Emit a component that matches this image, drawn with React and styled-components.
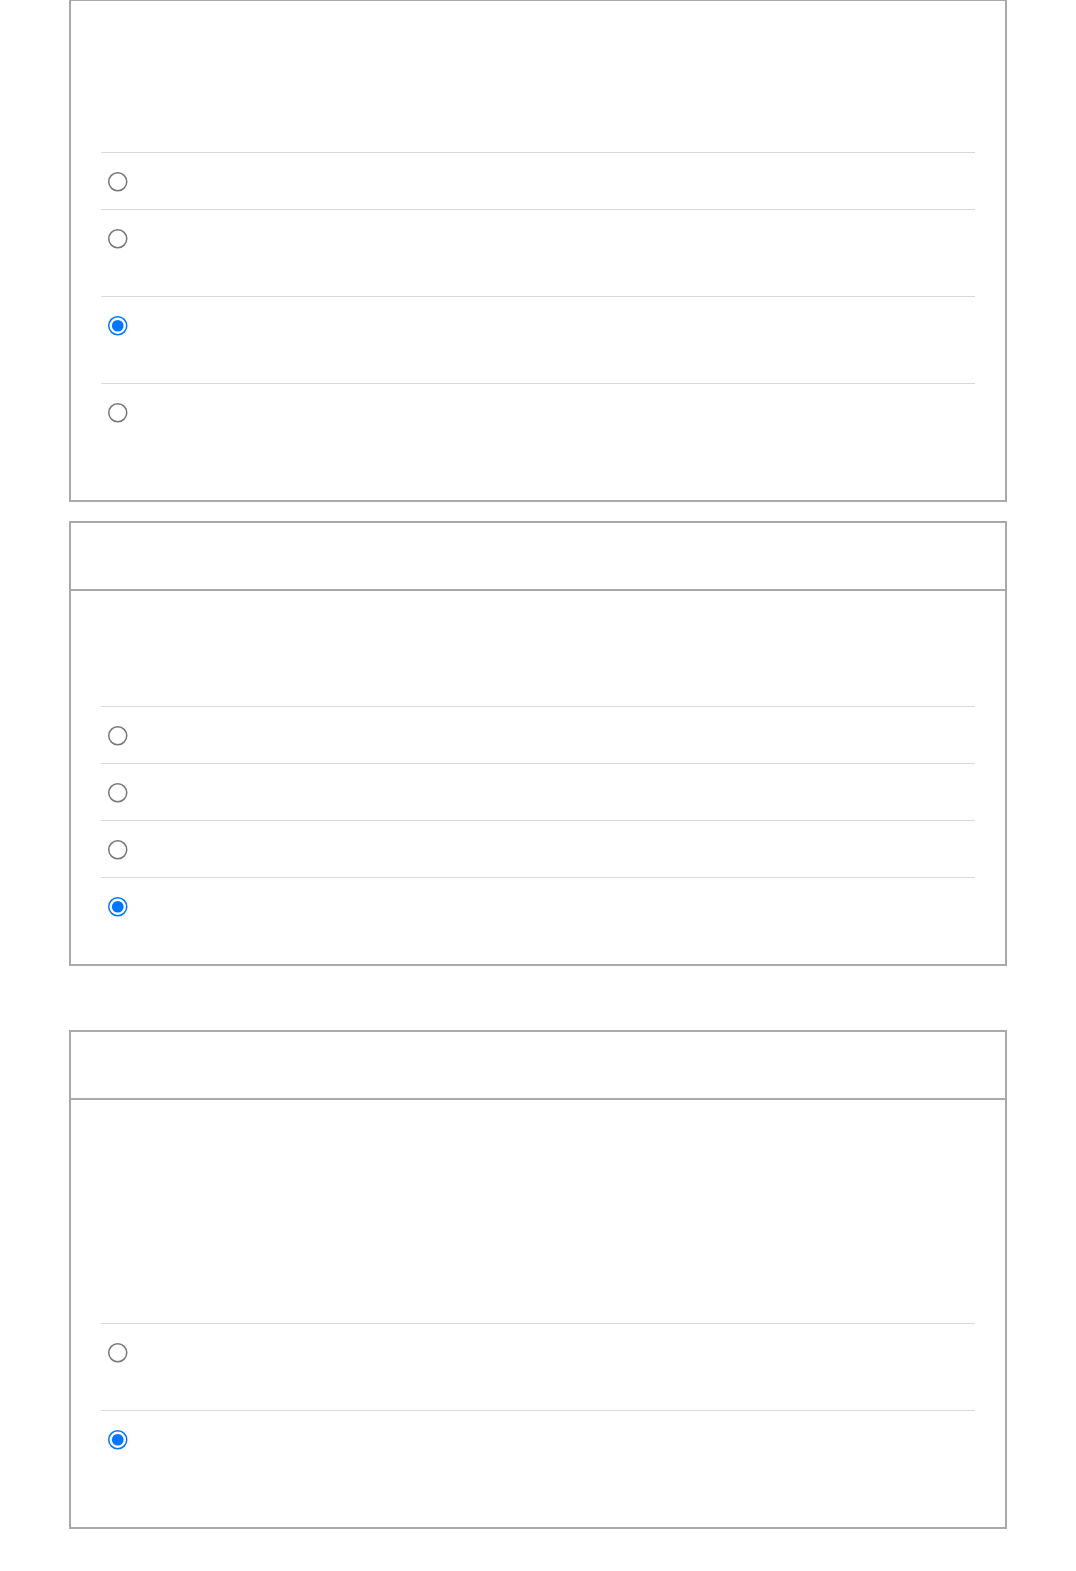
import React from 'react'
import styled, { createGlobalStyle } from 'styled-components'

const GlobalStyle = createGlobalStyle`
  body {
    margin: 0;
    background: #fff;
    font-family: "Liberation Sans", Arial, sans-serif;
  }
`

const Page = styled.div`
  width: 938px;
  margin: 0 auto;
  padding-bottom: 43px;
`

const Card = styled.section`
  box-sizing: border-box;
  border: 2px solid #a9a9a9;
  background: #fff;
  margin-top: ${p => p.$gap}px;
`

const CardHeader = styled.div`
  height: 66px;
  border-bottom: 2px solid #a9a9a9;
`

const CardBody = styled.div`
  padding: 30px;
`

const Question = styled.div`
  min-height: ${p => p.$height}px;
`

const OptionList = styled.div`
  display: flex;
  flex-direction: column;
`

const Option = styled.label`
  display: flex;
  align-items: flex-start;
  gap: 12px;
  border-top: 1px solid #d9d9d9;
  padding: 19px 7px 17px;
  min-height: ${p => (p.$tall ? 50 : 20)}px;
`

const Radio = styled.input.attrs({ type: 'radio' })`
  width: 13px;
  height: 13px;
  margin: 0;
  zoom: 1.5;
  flex: none;
`

const Quiz = ({ name, gap, header, question, options }) => (
  <Card $gap={gap}>
    {header && <CardHeader />}
    <CardBody>
      <Question $height={question} />
      <OptionList>
        {options.map((opt, i) => (
          <Option key={i} $tall={opt.tall}>
            <Radio name={name} defaultChecked={opt.checked} />
          </Option>
        ))}
      </OptionList>
    </CardBody>
  </Card>
)

export default function App() {
  return (
    <>
      <GlobalStyle />
      <Page>
        <Quiz
          name="q1"
          gap={-1}
          question={121}
          options={[
            {},
            { tall: true },
            { tall: true, checked: true },
            { tall: true }
          ]}
        />
        <Quiz
          name="q2"
          gap={19}
          header
          question={85}
          options={[{}, {}, {}, { checked: true }]}
        />
        <Quiz
          name="q3"
          gap={64}
          header
          question={193}
          options={[{ tall: true }, { tall: true, checked: true }]}
        />
      </Page>
    </>
  )
}
